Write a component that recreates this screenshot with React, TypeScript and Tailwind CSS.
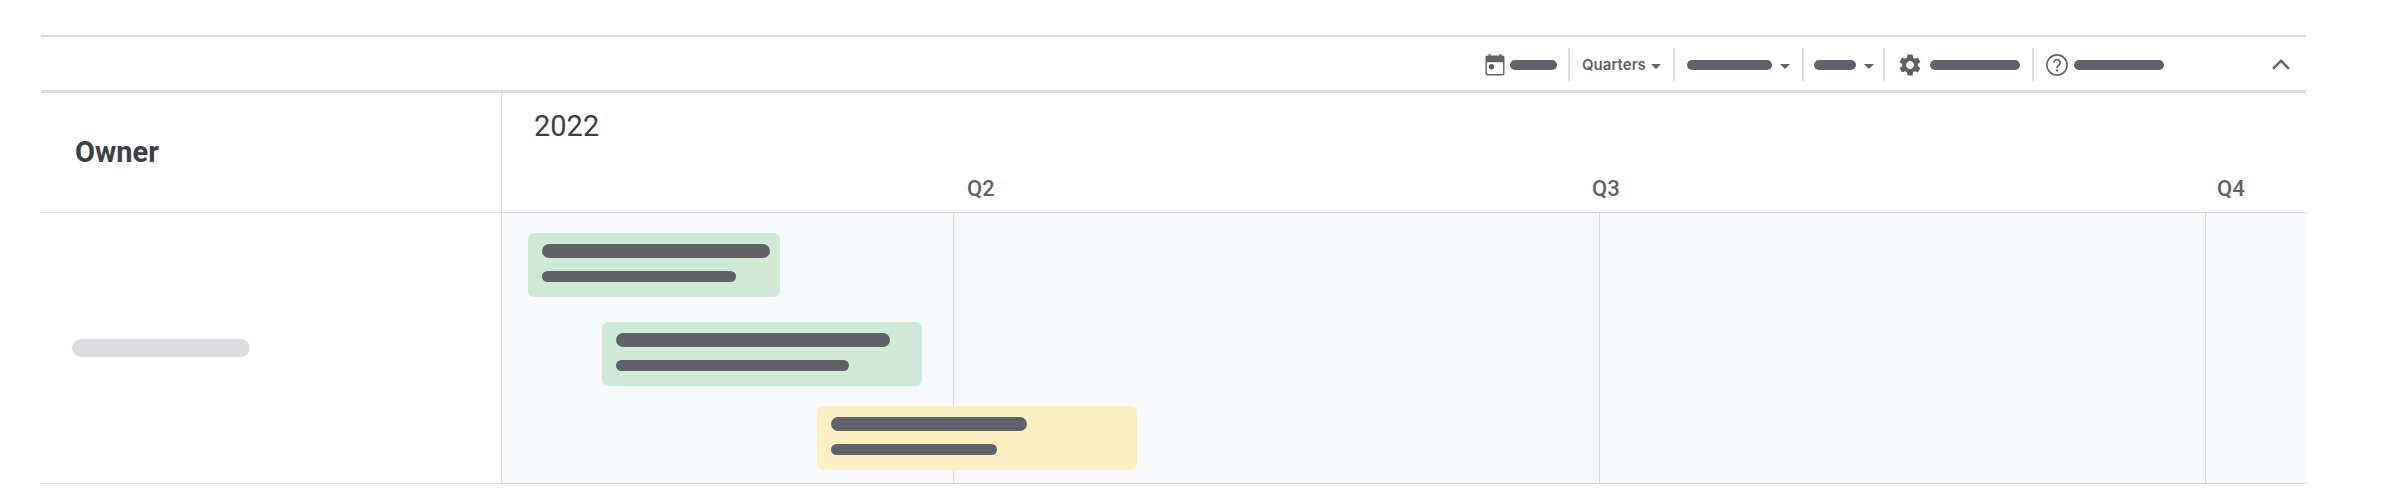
import type { ReactNode } from 'react';

type Task = {
    name: string;
    start: number;
    span: number;
    tone: string;
    offset: string;
    title: string;
    subtitle: string;
};

// Share of the timeline width, in percent
const tasks: Task[] = [
    { name: 'Task 1', start: 1.44, span: 13.97, tone: 'bg-[#ceead6]', offset: 'mt-5', title: 'w-[228px]', subtitle: 'w-[194px]' },
    { name: 'Task 2', start: 5.54, span: 17.74, tone: 'bg-[#ceead6]', offset: 'mt-[25px]', title: 'w-[274px]', subtitle: 'w-[233px]' },
    { name: 'Task 3', start: 17.46, span: 17.74, tone: 'bg-[#feefc3]', offset: 'mt-5', title: 'w-[196px]', subtitle: 'w-[166px]' },
];

function Pill({ className }: { className: string }) {
    return <span className={`block shrink-0 bg-[#5f6368] ${className}`} />;
}

function Caret() {
    return (
        <svg viewBox="0 0 10 5" className="mt-1 h-[5px] w-[10px] shrink-0" fill="#5f6368" aria-hidden="true">
            <path d="M0 0h10L5 5z" />
        </svg>
    );
}

function CalendarIcon() {
    return (
        <svg viewBox="0 0 20 22" className="h-[22px] w-5 shrink-0" aria-hidden="true">
            <path
                fill="#5f6368"
                fillRule="evenodd"
                d="M3.7 0h1.8v1.4h9V0h1.8v1.4h1.2A2 2 0 0 1 19.5 3.4v16a2 2 0 0 1-2 2h-15a2 2 0 0 1-2-2v-16a2 2 0 0 1 2-2h1.2zM1.9 8.2v11.1a.7.7 0 0 0 .7.7h14.8a.7.7 0 0 0 .7-.7V8.2z"
            />
            <circle cx="6.5" cy="12.7" r="2.7" fill="#5f6368" />
        </svg>
    );
}

function GearIcon() {
    return (
        <svg viewBox="2 2 20 20" className="size-[22px] shrink-0" fill="#5f6368" aria-hidden="true">
            <path d="M19.14 12.94c.04-.3.06-.61.06-.94 0-.32-.02-.64-.07-.94l2.03-1.58a.49.49 0 0 0 .12-.61l-1.92-3.32a.488.488 0 0 0-.59-.22l-2.39.96c-.5-.38-1.03-.7-1.62-.94l-.36-2.54a.484.484 0 0 0-.48-.41h-3.84c-.24 0-.43.17-.47.41l-.36 2.54c-.59.24-1.13.57-1.62.94l-2.39-.96c-.22-.08-.47 0-.59.22L2.74 8.87c-.12.21-.08.47.12.61l2.03 1.58c-.05.3-.09.63-.09.94s.02.64.07.94l-2.03 1.58a.49.49 0 0 0-.12.61l1.92 3.32c.12.22.37.29.59.22l2.39-.96c.5.38 1.03.7 1.62.94l.36 2.54c.05.24.24.41.48.41h3.84c.24 0 .44-.17.47-.41l.36-2.54c.59-.24 1.13-.56 1.62-.94l2.39.96c.22.08.47 0 .59-.22l1.92-3.32c.12-.22.07-.47-.12-.61l-2.01-1.58zM12 15.6c-1.98 0-3.6-1.62-3.6-3.6s1.62-3.6 3.6-3.6 3.6 1.62 3.6 3.6-1.62 3.6-3.6 3.6z" />
        </svg>
    );
}

function HelpIcon() {
    return (
        <svg viewBox="0 0 22 22" className="size-[22px] shrink-0" fill="none" stroke="#5f6368" aria-hidden="true">
            <circle cx="11" cy="11" r="10.1" strokeWidth="1.6" />
            <path d="M7.9 8.6a3.1 3.1 0 1 1 5.1 2.4c-1 .9-2 1.4-2 3" strokeWidth="1.7" />
            <circle cx="11" cy="16.4" r="1.2" fill="#5f6368" stroke="none" />
        </svg>
    );
}

function ToolbarGroup({ className = 'px-3', children }: { className?: string; children: ReactNode }) {
    return (
        <div className={`flex h-[33px] shrink-0 items-center border-l-2 border-[#dadce0] ${className}`}>
            {children}
        </div>
    );
}

function Toolbar() {
    return (
        <div className="flex h-[58px] items-center justify-end border-t-2 border-b-[3px] border-[#dadce0] pt-0.5 pr-4">
            <button type="button" aria-label="Today" className="flex items-center gap-[5px] pr-[11px]">
                <CalendarIcon />
                <Pill className="h-[10px] w-[47px] rounded-full" />
            </button>
            <ToolbarGroup>
                <label className="flex items-center gap-[5px]">
                    <select
                        aria-label="Time scale"
                        defaultValue="Quarters"
                        className="appearance-none bg-transparent p-0 font-[Inter,sans-serif] text-[15px] leading-5 font-semibold text-[#5f6368]"
                    >
                        <option>Months</option>
                        <option>Quarters</option>
                        <option>Years</option>
                    </select>
                    <Caret />
                </label>
            </ToolbarGroup>
            <ToolbarGroup>
                <button type="button" aria-label="View" className="flex items-center gap-2">
                    <Pill className="h-[10px] w-[85px] rounded-full" />
                    <Caret />
                </button>
            </ToolbarGroup>
            <ToolbarGroup className="pr-[9px] pl-[10px]">
                <button type="button" aria-label="Zoom" className="flex items-center gap-2">
                    <Pill className="h-[10px] w-[42px] rounded-full" />
                    <Caret />
                </button>
            </ToolbarGroup>
            <ToolbarGroup className="pr-3 pl-[14px]">
                <button type="button" aria-label="Settings" className="flex items-center gap-[9px]">
                    <GearIcon />
                    <Pill className="h-[10px] w-[90px] rounded-full" />
                </button>
            </ToolbarGroup>
            <ToolbarGroup className="mr-24 px-3">
                <button type="button" aria-label="Help" className="flex items-center gap-[6px]">
                    <HelpIcon />
                    <Pill className="h-[10px] w-[90px] rounded-full" />
                </button>
            </ToolbarGroup>
            <button type="button" aria-label="Collapse toolbar">
                <svg viewBox="0 0 18 11" className="h-[11px] w-[18px]" fill="none" stroke="#5f6368" strokeWidth="2.4" aria-hidden="true">
                    <path d="M1 9.8l8-8 8 8" />
                </svg>
            </button>
        </div>
    );
}

export default function App() {
    return (
        <main className="bg-white pt-[35px] pr-[94px] pb-4 pl-[41px] font-[Roboto,sans-serif]">
            <Toolbar />

            {/* Header row */}
            <div className="flex border-b border-[#dadce0]">
                <div className="flex w-[460px] shrink-0 items-center pb-0.5 pl-[34px]">
                    <h2 className="text-[29px] leading-8 font-bold text-[#3c4043]">Owner</h2>
                </div>
                <div className="flex-1 border-l border-[#dadce0] pt-[17px] pb-[11px]">
                    <div className="pl-8 text-[29px] leading-8 text-[#3c4043]">2022</div>
                    <div className="mt-[35px] grid grid-cols-[465fr_625fr_625fr_89fr] text-[22px] leading-6 font-medium text-[#5f6368]">
                        <span className="col-start-2">Q2</span>
                        <span>Q3</span>
                        <span>Q4</span>
                    </div>
                </div>
            </div>

            {/* Owner lane */}
            <div className="flex border-b border-[#dadce0]">
                <div className="flex w-[460px] shrink-0 items-center pl-[31px]">
                    <span className="block h-[18px] w-[178px] rounded-full bg-[#dadce0]" />
                </div>
                <div className="grid flex-1 border-l border-[#dadce0] bg-[#f8f9fb]">
                    <div className="col-start-1 row-start-1 grid grid-cols-[451fr_646fr_606fr_101fr]">
                        <div className="col-start-2 border-l border-[#dadce0]" />
                        <div className="border-l border-[#dadce0]" />
                        <div className="border-l border-[#dadce0]" />
                    </div>
                    <div className="col-start-1 row-start-1 pb-[13px]">
                        {tasks.map((task) => (
                            <div
                                key={task.name}
                                className={`h-16 rounded-md px-[14px] pt-[11px] ${task.tone} ${task.offset}`}
                                style={{ marginLeft: `${task.start}%`, width: `${task.span}%` }}
                            >
                                <Pill className={`h-[14px] rounded-full ${task.title}`} />
                                <Pill className={`mt-[13px] h-[11px] rounded-full ${task.subtitle}`} />
                            </div>
                        ))}
                    </div>
                </div>
            </div>
        </main>
    );
}
